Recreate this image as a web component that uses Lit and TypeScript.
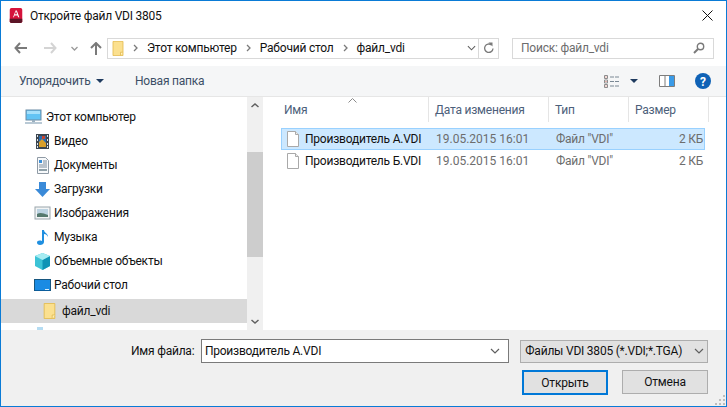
import { LitElement, html, css, svg } from 'lit';
import { customElement } from 'lit/decorators.js';

const folderIcon = (w: number, h: number) => html`
  <svg width=${w} height=${h} viewBox="0 0 13 18">
    <path d="M.5.5h12v17H.5z" fill="#fbe08f" stroke="#e3bb4f" />
    <path d="M9.5 17.5v-4h3" fill="#fff3c4" stroke="#e3bb4f" />
  </svg>
`;

const fileIcon = html`
  <svg width="12" height="16" viewBox="0 0 12 16">
    <path d="M.5.5h8l3 3v12H.5z" fill="#fff" stroke="#a9a9a9" />
    <path d="M8.5.5v3h3" fill="#eee" stroke="#a9a9a9" />
  </svg>
`;

const NAV_ICONS: Record<string, unknown> = {
  computer: svg`
    <rect x="1" y="1" width="15" height="10" fill="#62c3f4" stroke="#6b8ba5" />
    <rect x="2" y="2" width="13" height="3" fill="#a6e0fb" />
    <path d="M7 11h3v2H7z" fill="#9ab0c0" />
    <path d="M0 13h17v2H0z" fill="#b9c9d5" />
  `,
  video: svg`
    <rect x="2" y="1" width="13" height="15" fill="#3c4650" />
    <rect x="5" y="3" width="7" height="11" fill="#2a6bb0" />
    <path d="M5 9l3-3 4 4v4H5z" fill="#d9a02c" />
    <path d="M8 3h3v3H8z" fill="#c9452f" />
    <path d="M3 2h1v2H3zM3 6h1v2H3zM3 10h1v2H3zM3 13h1v2H3zM13 2h1v2h-1zM13 6h1v2h-1zM13 10h1v2h-1zM13 13h1v2h-1z" fill="#dfe5ea" />
  `,
  docs: svg`
    <path d="M3.5 .5h8l3 3v13h-11z" fill="#f7f9fb" stroke="#8f9aa5" />
    <path d="M5 3h3v3H5z" fill="#3d8fd6" />
    <path d="M9 4h4M9 6h4M5 8h8M5 10h8" stroke="#7c8c9c" />
    <path d="M5 12h8v2H5z" fill="#8fa0a8" />
  `,
  downloads: svg`<path d="M5 1h7v7h4l-7.500 8L1 8h4z" fill="#3a8ad8" />`,
  pictures: svg`
    <rect x="1" y="2" width="15" height="12" fill="#f2f4f5" stroke="#9aa5ac" />
    <rect x="3" y="4" width="11" height="8" fill="#bcd3e2" />
    <path d="M3 9c3-2 6-1 11 1v2H3z" fill="#55796e" />
  `,
  music: svg`
    <path d="M8 1h2c0 3 4 3 4 7-1-2-2-3-4-3v8c0 2-2 3-4 3s-3-1-3-2.500S5 11 8 12z" fill="#1f8fe0" />
  `,
  objects: svg`
    <path d="M8.500 0L16 3v10l-7.500 4L1 13V3z" fill="#3cc3d6" />
    <path d="M8.500 7L16 3v10l-7.500 4z" fill="#0f93b5" />
    <path d="M8.500 0L16 3 8.500 7 1 3z" fill="#a6ecf2" />
  `,
  desktop: svg`
    <rect x="0.500" y="2.500" width="16" height="11" fill="#1a8be3" stroke="#17567f" />
    <path d="M1 13h15v1H1z" fill="#0b5d9c" />
    <path d="M11 12h4v1h-4z" fill="#d9eefb" />
  `,
  peek: svg`<path d="M3 0h6v3H3z" fill="#b5dcf2" />`,
};

const NAV_ITEMS = [
  { icon: 'computer', label: 'Этот компьютер', kind: 'root' },
  { icon: 'video', label: 'Видео', kind: 'sub' },
  { icon: 'docs', label: 'Документы', kind: 'sub' },
  { icon: 'downloads', label: 'Загрузки', kind: 'sub' },
  { icon: 'pictures', label: 'Изображения', kind: 'sub' },
  { icon: 'music', label: 'Музыка', kind: 'sub' },
  { icon: 'objects', label: 'Объемные объекты', kind: 'sub' },
  { icon: 'desktop', label: 'Рабочий стол', kind: 'sub' },
];

const FILES = [
  { name: 'Производитель А.VDI', selected: true },
  { name: 'Производитель Б.VDI', selected: false },
];

@customElement('app-root')
export class AppRoot extends LitElement {
  static styles = css`
    :host {
      display: block;
      width: 727px;
      height: 407px;
      font-family: 'Roboto', 'Noto Sans', sans-serif;
      font-size: 12px;
      letter-spacing: -0.22px;
      color: #111;
    }

    * {
      box-sizing: border-box;
    }

    .window {
      width: 727px;
      height: 407px;
      border: 1px solid #0a7bd6;
      background: #fff;
      display: flex;
      flex-direction: column;
      overflow: hidden;
    }

    .title {
      height: 29px;
      flex: none;
      display: flex;
      align-items: center;
      padding: 0 13px 0 8px;
      gap: 7px;
      font-size: 12px;
    }

    .title span {
      flex: 1;
    }

    .nav {
      height: 36px;
      flex: none;
      display: flex;
      align-items: center;
      padding: 0 12px 0 13px;
    }

    .nav-buttons {
      width: 93px;
      flex: none;
      display: flex;
      align-items: center;
    }

    .crumbs {
      width: 392px;
      height: 21px;
      flex: none;
      border: 1px solid #d9d9d9;
      display: flex;
      align-items: center;
      padding-left: 4px;
    }

    .crumb-text {
      margin-right: 9px;
      white-space: nowrap;
    }

    .chev {
      margin-right: 9px;
      flex: none;
    }

    .crumb-end {
      margin-left: auto;
      width: 35px;
      height: 100%;
      display: flex;
      align-items: center;
      padding-left: 4px;
    }

    .crumb-refresh {
      height: 100%;
      width: 20px;
      border-left: 1px solid #d9d9d9;
      display: flex;
      align-items: center;
      justify-content: center;
      margin-left: auto;
    }

    .search {
      margin-left: 13px;
      width: 202px;
      height: 21px;
      flex: none;
      border: 1px solid #d9d9d9;
      display: flex;
      align-items: center;
      justify-content: space-between;
      padding: 0 8px;
      color: #6d6d6d;
    }

    .toolbar {
      height: 31px;
      flex: none;
      background: #f5f6f7;
      border-bottom: 1px solid #e6e6e6;
      display: flex;
      align-items: center;
      padding: 0 15px 0 18px;
      color: #3c4f66;
    }

    .organize {
      display: flex;
      align-items: center;
      gap: 6px;
      width: 116px;
    }

    .views {
      margin-left: auto;
      display: flex;
      align-items: center;
    }

    .view-list {
      margin-right: 10px;
    }

    .view-arrow {
      margin-right: 21px;
    }

    .view-pane {
      margin-right: 20px;
    }

    .body {
      flex: 1;
      min-height: 0;
      display: flex;
    }

    .tree {
      width: 246px;
      flex: none;
      padding-top: 8px;
      overflow: hidden;
    }

    .tree-row {
      height: 24px;
      display: flex;
      align-items: center;
      white-space: nowrap;
    }

    .tree-row.root {
      padding-left: 24px;
      gap: 4px;
    }

    .tree-row.sub {
      padding-left: 33px;
      gap: 3px;
    }

    .tree-row.current {
      margin-top: 2px;
      background: #d9d9d9;
      padding-left: 42px;
      gap: 6px;
    }

    .scroll {
      width: 16px;
      flex: none;
      background: #f0f0f0;
      display: flex;
      flex-direction: column;
      align-items: center;
      justify-content: space-between;
      padding: 6px 0;
      position: relative;
    }

    .thumb {
      position: absolute;
      left: 0;
      top: 55px;
      width: 16px;
      height: 105px;
      background: #cdcdcd;
    }

    .files {
      flex: 1;
      position: relative;
      padding-left: 18px;
    }

    .sort {
      position: absolute;
      left: 85px;
      top: 1px;
    }

    .head,
    .row {
      display: grid;
      grid-template-columns: 148px 120px 80px 76px;
      align-items: center;
    }

    .head {
      height: 25px;
      grid-template-columns: 148px 120px 80px 80px;
      margin-bottom: 6px;
      color: #4c607a;
    }

    .head div {
      height: 25px;
      line-height: 27px;
      padding-left: 3px;
      border-right: 1px solid #e5e5e5;
    }

    .head div + div {
      padding-left: 6px;
    }

    .row {
      height: 22px;
      color: #6d6d6d;
      border: 1px solid transparent;
      width: 424px;
    }

    .row.selected {
      background: #cce8ff;
      border-color: #99d1ff;
    }

    .row .name {
      display: flex;
      align-items: center;
      gap: 6px;
      padding-left: 5px;
      color: #111;
      white-space: nowrap;
    }

    .row .date,
    .row .type {
      padding-left: 6px;
      white-space: nowrap;
    }

    .row .date {
      letter-spacing: 0;
    }

    .row .size {
      text-align: right;
      padding-right: 3px;
    }

    .footer {
      height: 76px;
      flex: none;
      background: #f0f0f0;
      padding: 9px 18px 0 130px;
      position: relative;
    }

    .grip {
      position: absolute;
      right: 1px;
      bottom: 1px;
    }

    .line {
      display: flex;
      align-items: center;
    }

    .name-label {
      width: 70px;
    }

    .name-input {
      width: 309px;
      height: 24px;
      border: 1px solid #7a7a7a;
      background: #fff;
      display: flex;
      align-items: center;
      justify-content: space-between;
      padding: 0 8px 0 3px;
    }

    .filter {
      margin-left: 11px;
      width: 188px;
      height: 23px;
      border: 1px solid #adadad;
      background: #e1e1e1;
      display: flex;
      align-items: center;
      justify-content: space-between;
      padding: 0 3px 0 4px;
      white-space: nowrap;
    }

    .buttons {
      display: flex;
      justify-content: flex-end;
      gap: 14px;
      margin-top: 7px;
    }

    .btn {
      width: 86px;
      height: 24px;
      border: 1px solid #adadad;
      background: #e1e1e1;
      display: flex;
      align-items: center;
      justify-content: center;
    }

    .btn.primary {
      border: 2px solid #0078d7;
      height: 25px;
    }

    .nav-back,
    .nav-up {
      flex: none;
    }

    .nav-back {
      margin-right: 17px;
    }

    .nav-forward {
      margin-right: 14px;
    }

    .nav-recent {
      margin-right: 12px;
    }

    .crumb-folder {
      margin-right: 9px;
      display: flex;
    }
  `;

  private chevron(color = '#7a7a7a') {
    return html`
      <svg class="chev" width="5" height="8" viewBox="0 0 5 8">
        <path d="M1 1l3 3-3 3" fill="none" stroke=${color} stroke-width="1.300" />
      </svg>
    `;
  }

  private down(width = 10) {
    return html`
      <svg width=${width} height="6" viewBox="0 0 10 6">
        <path d="M1 1l4 4 4-4" fill="none" stroke="#5f5f5f" stroke-width="1.200" />
      </svg>
    `;
  }

  private renderTitle() {
    return html`
      <div class="title">
        <svg width="14" height="15" viewBox="0 0 15 18">
          <rect width="15" height="18" rx="2" fill="#d5133b" />
          <path d="M0 13h15v3a2 2 0 0 1-2 2H2a2 2 0 0 1-2-2z" fill="#5c1527" />
          <path d="M4 11l3-8h1.500l3 8H10l-.7-2H5.700L5 11zM6.200 7.500h2.600L7.500 4z" fill="#fff" />
        </svg>
        <span>Откройте файл VDI 3805</span>
        <svg width="11" height="11" viewBox="0 0 11 11">
          <path d="M.5.5l10 10M10.500.5l-10 10" stroke="#111" fill="none" />
        </svg>
      </div>
    `;
  }

  private renderNav() {
    return html`
      <div class="nav">
        <div class="nav-buttons">
          <svg class="nav-back" width="13" height="12" viewBox="0 0 13 12">
            <path d="M6 1L1.500 6 6 11M1.500 6H13" fill="none" stroke="#7a7a7a" stroke-width="2" />
          </svg>
          <svg class="nav-forward" width="13" height="12" viewBox="0 0 13 12">
            <path d="M7 1l4.500 5L7 11M11.500 6H0" fill="none" stroke="#d4d4d4" stroke-width="2" />
          </svg>
          <svg class="nav-recent" width="7" height="5" viewBox="0 0 7 5">
            <path d="M.5 1l3 3 3-3" fill="none" stroke="#9a9a9a" stroke-width="1.300" />
          </svg>
          <svg class="nav-up" width="12" height="13" viewBox="0 0 12 13">
            <path d="M1 6l5-5 5 5M6 1v12" fill="none" stroke="#7a7a7a" stroke-width="2" />
          </svg>
        </div>
        <div class="crumbs">
          <span class="crumb-folder">${folderIcon(12, 15)}</span>
          ${this.chevron()}
          <span class="crumb-text">Этот компьютер</span>
          ${this.chevron()}
          <span class="crumb-text">Рабочий стол</span>
          ${this.chevron()}
          <span class="crumb-text">файл_vdi</span>
          <div class="crumb-end">
            ${this.down(9)}
            <div class="crumb-refresh">
              <svg width="11" height="12" viewBox="0 0 11 12">
                <path d="M8.500 3a4.200 4.200 0 1 0 1.500 3.500" fill="none" stroke="#7a7a7a" stroke-width="1.300" />
                <path d="M5.500 .5l4 0v4z" fill="#7a7a7a" />
              </svg>
            </div>
          </div>
        </div>
        <div class="search">
          <span>Поиск: файл_vdi</span>
          <svg width="12" height="12" viewBox="0 0 12 12">
            <circle cx="7.500" cy="4.500" r="3.200" fill="none" stroke="#7a7a7a" stroke-width="1.400" />
            <path d="M5 7l-4 4" stroke="#7a7a7a" stroke-width="2" />
          </svg>
        </div>
      </div>
    `;
  }

  private renderToolbar() {
    return html`
      <div class="toolbar">
        <div class="organize">
          Упорядочить
          <svg width="8" height="4" viewBox="0 0 8 4"><path d="M0 0h8L4 4z" fill="#1e3a5f" /></svg>
        </div>
        <div>Новая папка</div>
        <div class="views">
          <svg class="view-list" width="16" height="13" viewBox="0 0 16 13">
            <path d="M.5.5h3v3h-3zM.5 5h3v3h-3zM.5 9.500h3v3h-3z" fill="#fff" stroke="#8d8d8d" />
            <path d="M2 2h.01M2 6.500h.01M2 11h.01" stroke="#c0392b" stroke-linecap="round" />
            <path d="M6 2h4M11 2h4M6 6.500h4M11 6.500h4M6 11h4M11 11h4" stroke="#7a8894" />
          </svg>
          <svg class="view-arrow" width="8" height="4" viewBox="0 0 8 4"><path d="M0 0h8L4 4z" fill="#1e3a5f" /></svg>
          <svg class="view-pane" width="16" height="12" viewBox="0 0 16 12">
            <path d="M.5.5h15v11H.5z" fill="#fff" stroke="#7d7d7d" />
            <path d="M6 1v10" stroke="#7d7d7d" />
            <path d="M10 1h5v10h-5z" fill="#3a9be8" />
          </svg>
          <svg width="16" height="16" viewBox="0 0 16 16">
            <circle cx="8" cy="8" r="8" fill="#0f62b6" />
            <text x="8" y="12.500" text-anchor="middle" font-size="12" font-weight="700" fill="#fff">?</text>
          </svg>
        </div>
      </div>
    `;
  }

  private renderTree() {
    return html`
      <div class="tree">
        ${NAV_ITEMS.map(
          (item) => html`
            <div class="tree-row ${item.kind}">
              <svg width="17" height="17" viewBox="0 0 17 17">${NAV_ICONS[item.icon]}</svg>
              <span>${item.label}</span>
            </div>
          `,
        )}
        <div class="tree-row current">${folderIcon(13, 16)}<span>файл_vdi</span></div>
        <div class="tree-row sub">
          <svg width="17" height="17" viewBox="0 0 17 17">${NAV_ICONS.peek}</svg>
        </div>
      </div>
      <div class="scroll">
        <div class="thumb"></div>
        <svg width="8" height="5" viewBox="0 0 8 5"><path d="M.5 4L4 1l3.500 3" fill="none" stroke="#606060" stroke-width="1.500" /></svg>
        <svg width="8" height="5" viewBox="0 0 8 5"><path d="M.5 1L4 4l3.500-3" fill="none" stroke="#606060" stroke-width="1.500" /></svg>
      </div>
    `;
  }

  private renderFiles() {
    return html`
      <div class="files">
        <svg class="sort" width="9" height="5" viewBox="0 0 9 5">
          <path d="M.5 4.500l4-4 4 4" fill="none" stroke="#8a8a8a" />
        </svg>
        <div class="head">
          <div>Имя</div>
          <div>Дата изменения</div>
          <div>Тип</div>
          <div>Размер</div>
        </div>
        ${FILES.map(
          (file) => html`
            <div class="row ${file.selected ? 'selected' : ''}">
              <div class="name">${fileIcon}<span>${file.name}</span></div>
              <div class="date">19.05.2015 16:01</div>
              <div class="type">Файл "VDI"</div>
              <div class="size">2 КБ</div>
            </div>
          `,
        )}
      </div>
    `;
  }

  render() {
    return html`
      <div class="window">
        ${this.renderTitle()} ${this.renderNav()} ${this.renderToolbar()}
        <div class="body">${this.renderTree()} ${this.renderFiles()}</div>
        <div class="footer">
          <div class="line">
            <div class="name-label">Имя файла:</div>
            <div class="name-input"><span>Производитель А.VDI</span>${this.down()}</div>
            <div class="filter"><span>Файлы VDI 3805 (*.VDI;*.TGA)</span>${this.down()}</div>
          </div>
          <div class="buttons">
            <div class="btn primary">Открыть</div>
            <div class="btn">Отмена</div>
          </div>
          <svg class="grip" width="10" height="10" viewBox="0 0 10 10">
            <path d="M8 0h2v2H8zM4 4h2v2H4zM8 4h2v2H8zM0 8h2v2H0zM4 8h2v2H4zM8 8h2v2H8z" fill="#bdbdbd" />
          </svg>
        </div>
      </div>
    `;
  }
}

declare global {
  interface HTMLElementTagNameMap {
    'app-root': AppRoot;
  }
}
